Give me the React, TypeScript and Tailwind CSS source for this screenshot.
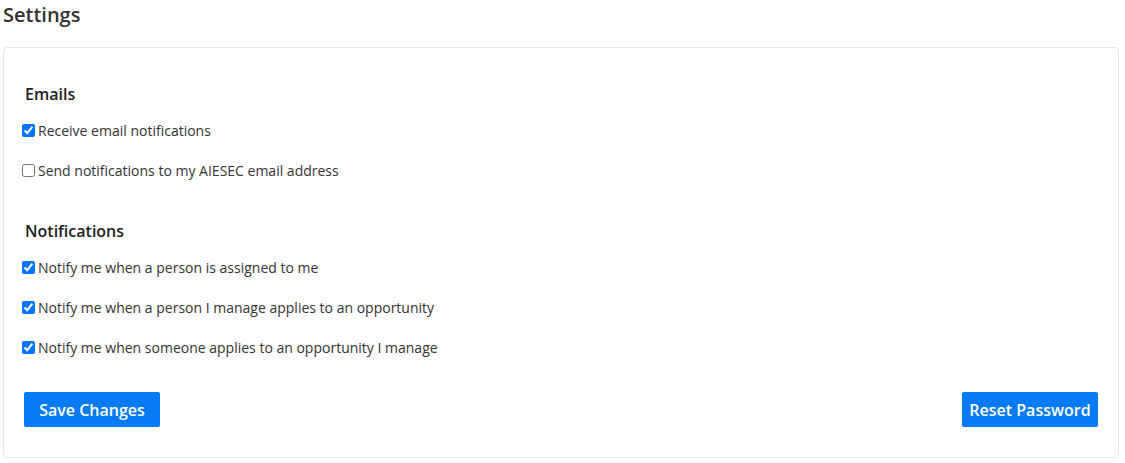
import React from "react";

const emailOptions = [
  { label: "Receive email notifications", checked: true },
  { label: "Send notifications to my AIESEC email address", checked: false },
];

const notificationOptions = [
  { label: "Notify me when a person is assigned to me", checked: true },
  { label: "Notify me when a person I manage applies to an opportunity", checked: true },
  { label: "Notify me when someone applies to an opportunity I manage", checked: true },
];

const Option = ({ label, checked }: { label: string; checked: boolean }) => (
  <label className="flex items-center h-[20px] text-[14px] text-[#333]">
    <input
      type="checkbox"
      defaultChecked={checked}
      className="w-[13px] h-[13px] m-0 mr-[3px]"
    />
    <span>{label}</span>
  </label>
);

const App = () => {
  return (
    <div className="w-[1125px] h-[463px] bg-white font-['Open_Sans',sans-serif] text-[#212529]">
      <h1 className="pl-[3px] pt-[1px] text-[20px] leading-[28px] font-semibold text-[#333]">
        Settings
      </h1>
      <div className="ml-[3px] mr-[6px] mt-[18px] h-[411px] border border-[#e6e6e6] rounded-[4px] px-[18px] pt-[34px]">
        {/* Emails */}
        <h2 className="pl-[3px] text-[16px] leading-[24px] font-semibold text-[#222]">Emails</h2>
        <div className="mt-[14px] flex flex-col gap-[20px]">
          {emailOptions.map((o) => (
            <Option key={o.label} {...o} />
          ))}
        </div>

        {/* Notifications */}
        <h2 className="mt-[39px] pl-[3px] text-[16px] leading-[24px] font-semibold text-[#222]">
          Notifications
        </h2>
        <div className="mt-[14px] flex flex-col gap-[20px]">
          {notificationOptions.map((o) => (
            <Option key={o.label} {...o} />
          ))}
        </div>

        <div className="mt-[35px] flex justify-between pl-[2px] pr-[2px]">
          <button className="h-[35px] w-[136px] bg-[#077bf5] rounded-[2px] text-white text-[16px] font-semibold">
            Save Changes
          </button>
          <button className="h-[35px] w-[136px] bg-[#077bf5] rounded-[2px] text-white text-[16px] font-semibold">
            Reset Password
          </button>
        </div>
      </div>
    </div>
  );
};

export default App;
